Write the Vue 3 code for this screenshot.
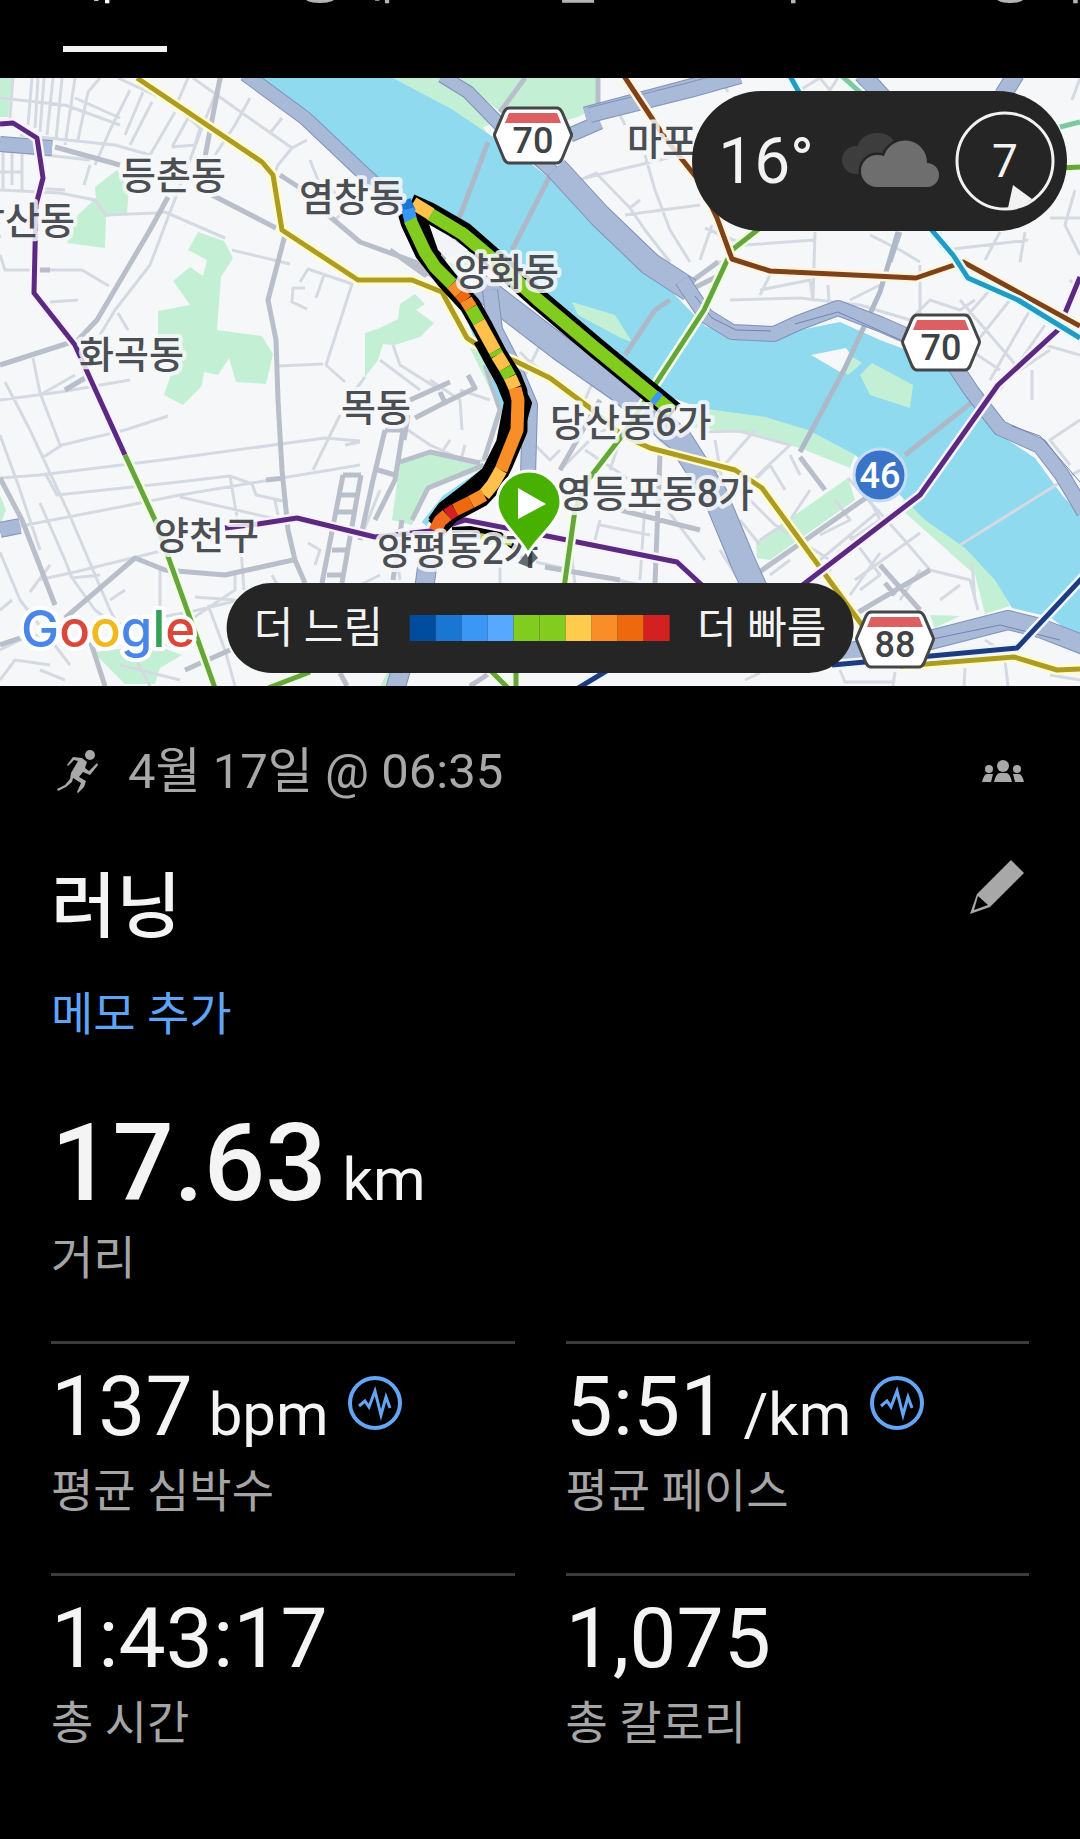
<template>
  <div class="activity-page">
    <nav class="tabs">
      <button
        v-for="tab in tabs"
        :key="tab"
        type="button"
        class="tab"
        :class="{ 'is-active': tab === activeTab }"
        @click="activeTab = tab"
      >
        <span class="tab-label">{{ tab }}</span>
        <span class="tab-line"></span>
      </button>
    </nav>

    <section class="map">
      <svg class="map-canvas" viewBox="0 78 1080 608" role="img" aria-label="러닝 경로 지도">
        <rect x="0" y="78" width="1080" height="608" fill="#f6f7f8" />

        <!-- parks -->
        <path v-for="(d, i) in parks" :key="'p' + i" :d="d" fill="#c3f0d5" />

        <!-- streets -->
        <path class="street" :d="streets" />
        <path class="avenue" :d="avenues" />

        <!-- river -->
        <path class="water" :d="river" />
        <path fill="#c3f0d5" d="M572 302L615 315L632 342L621 338L578 315ZM872 363L913 385L910 408L870 395L860 375ZM845 352L862 363L848 375L838 366Z" />
        <path fill="#f6f7f8" d="M811 355L846 348L852 356L840 372Z" />
        <path fill="#f6f7f8" d="M428 226L448 240L466 262L456 266L446 260L436 245Z" />
        <path class="stream" d="M493 378L504 404L508 432L492 466L445 498L424 524M472 325L490 370" />
        <path class="bridge" d="M488 142L470 190L442 262M552 172L512 250M670 300L655 310L625 355M898 232L880 292L845 368L800 452M905 455L975 400" />
        <path class="street" d="M1080 470L960 545" />

        <!-- expressways -->
        <g v-for="(road, i) in expressways" :key="'e' + i">
          <path class="highway-edge" :d="road.d" :stroke-width="road.width + 2" />
          <path class="highway" :d="road.d" :stroke-width="road.width" />
        </g>
        <path class="highway-lane" d="M695 296L712 318L736 330L771 331M795 324L838 312L905 342M1012 426L1040 436L1080 482M870 652L1000 625L1060 640" />

        <!-- subway -->
        <g v-for="(line, i) in subway" :key="'s' + i">
          <path class="line-case" :d="line.d" :stroke="line.glow" />
          <path class="line" :d="line.d" :stroke="line.color" />
        </g>

        <!-- recorded track -->
        <path class="track-case" d="M410 204L430 213L463 232L495 260L537 298L595 347L640 384L674 412" />
        <path class="track-case" d="M408 212L411 222L425 252L447 280L470 305L483 328L497 355L511 377L517 392L517 430L503 463L493 483L480 497L450 513L436 528" />
        <path class="track-shade" d="M480 340L503 382L511 402L503 443L488 473L470 488L444 508L434 522" />
        <path class="track-shade thin" d="M420 214L428 232L438 256M515 378L528 403L521 428" />
        <path fill="#f3f4f8" d="M430 227L450 237L468 250L446 258L438 250Z" />
        <path
          v-for="(part, i) in track"
          :key="'t' + i"
          class="track"
          :d="part.d"
          :stroke="part.color"
        />
        <path d="M452 530L470 529L500 535L515 548" fill="none" stroke="#000" stroke-width="6" />
        <path d="M460 536L480 536" fill="none" stroke="#57a9ff" stroke-width="5" />
        <path d="M480 536L512 543" fill="none" stroke="#b5cf4a" stroke-width="6" />

        <!-- place names -->
        <text
          v-for="place in places"
          :key="place.name"
          class="place"
          :x="place.x"
          :y="place.y"
        >{{ place.name }}</text>

        <!-- road shields -->
        <g v-for="(shield, i) in shields" :key="'h' + i" :transform="`translate(${shield.x} ${shield.y})`">
          <path d="M-24 -27H24Q27 -27 29 -23L38 -2Q39 0 38 2L29 24Q27 28 24 28H-24Q-27 28 -29 24L-38 2Q-39 0 -38 -2L-29 -23Q-27 -27 -24 -27Z" fill="#fff" stroke="#43474a" stroke-width="3" />
          <path d="M-24 -22H24L28 -12H-28Z" fill="#dc5f62" />
          <text class="shield-text" x="0" y="18">{{ shield.label }}</text>
        </g>
        <circle cx="880" cy="475" r="26" fill="#3b73c8" stroke="#c5ddf5" stroke-width="3" />
        <text class="route-text" x="880" y="488">46</text>

        <!-- start marker -->
        <path d="M518 563L530 548L538 558L528 567Z" fill="#26303a" opacity="0.7" />
        <path d="M528 554C520 536 497 522 497 502A32 31 0 0 1 561 502C561 522 537 537 528 554Z" fill="#48b000" stroke="#fff" stroke-width="3" />
        <path d="M518 488L546 504L518 519Z" fill="#fff" />

        <text class="google" x="21" y="647"><tspan fill="#4a86e8">G</tspan><tspan fill="#d9483b">o</tspan><tspan fill="#f0b91f">o</tspan><tspan fill="#4a86e8">g</tspan><tspan fill="#35a257">l</tspan><tspan fill="#d9483b">e</tspan></text>
      </svg>

      <div class="weather">
        <span class="temperature">16°</span>
        <svg class="clouds" viewBox="0 0 100 56" aria-hidden="true">
          <path d="M14 41A14 14 0 0 1 16 13A22 22 0 0 1 54 9L44 22L20 41Z" fill="#3d3d3d" />
          <path d="M36 54A16 16 0 0 1 36 22Q40 22 43 23A22 22 0 0 1 86 30A12 12 0 0 1 86 54Z" fill="#6e6e6e" stroke="#252525" stroke-width="5" paint-order="stroke" />
        </svg>
        <div class="wind">
          <svg viewBox="0 0 100 100" aria-hidden="true">
            <circle cx="50" cy="50" r="48" fill="none" stroke="#f2f2f2" stroke-width="3" />
            <path d="M58 74L77 88Q66 97 53 97Z" fill="#f2f2f2" />
          </svg>
          <span>7</span>
        </div>
      </div>

      <div class="legend">
        <span>더 느림</span>
        <div class="legend-scale">
          <i v-for="(color, i) in paceColors" :key="i" :style="{ background: color }"></i>
        </div>
        <span>더 빠름</span>
      </div>
    </section>

    <main class="summary">
      <div class="meta-row">
        <svg class="run-icon" viewBox="0 0 42 44" aria-hidden="true">
          <circle cx="33" cy="6" r="5" />
          <path d="M11 17L10 16L16 8L25 9L30 13L28 19L32 22L40 14L41 16L33 26L26 23L22 28L29 32L27 38L21 44L20 43L24 34L16 29L15 33L9 38L1 42L0 40L8 36L13 30L14 24L21 12L17 11Z" />
        </svg>
        <span class="meta-date">4월 17일 @ 06:35</span>
        <button type="button" class="icon-button" aria-label="공개 대상">
          <svg class="group-icon" viewBox="0 0 42 22" aria-hidden="true">
            <circle cx="21" cy="6" r="6" />
            <circle cx="7" cy="9" r="4" />
            <circle cx="35" cy="9" r="4" />
            <path d="M12 22Q14 13 18 13H24Q28 13 30 22ZM0 22Q2 14 5 14H11L9 22ZM42 22Q40 14 37 14H31L33 22Z" />
          </svg>
        </button>
      </div>

      <div class="title-row">
        <h1>러닝</h1>
        <button type="button" class="icon-button" aria-label="이름 편집">
          <svg class="pencil-icon" viewBox="0 0 54 54" aria-hidden="true">
            <path fill-rule="evenodd" d="M41 0L54 13L20 47L0 54L7 34ZM8 36L4 50L18 45Z" />
          </svg>
        </button>
      </div>

      <button type="button" class="memo-button">메모 추가</button>

      <div class="stat stat-main">
        <p class="stat-value"><strong>17.63</strong> <span class="unit">km</span></p>
        <p class="stat-label">거리</p>
      </div>

      <div class="stat-grid">
        <div v-for="stat in stats" :key="stat.label" class="stat">
          <p class="stat-value">
            <span>{{ stat.value }}</span>
            <span v-if="stat.unit" class="unit">{{ stat.unit }}</span>
            <button v-if="stat.insight" type="button" class="insight" :aria-label="stat.label + ' 분석'">
              <svg viewBox="0 0 54 54" aria-hidden="true">
                <circle cx="27" cy="27" r="25" stroke-width="4" />
                <path d="M11 30L17 25L21 31L27 15L33 39L38 21L42 32" stroke-width="3" />
              </svg>
            </button>
          </p>
          <p class="stat-label">{{ stat.label }}</p>
        </div>
      </div>
    </main>
  </div>
</template>

<script setup>
import { ref } from 'vue'

const tabs = ['개요', '통계', '랩', '차트', '장비']
const activeTab = ref('개요')

const stats = [
  { value: '137', unit: 'bpm', label: '평균 심박수', insight: true },
  { value: '5:51', unit: '/km', label: '평균 페이스', insight: true },
  { value: '1:43:17', label: '총 시간' },
  { value: '1,075', label: '총 칼로리' }
]

const paceColors = [
  '#004da0', '#1976d2', '#3b97f5', '#57a9ff', '#82cb1f',
  '#82cb1f', '#ffcb4c', '#f98d27', '#ee680d', '#d32121'
]

const places = [
  { name: '등촌동', x: 121, y: 189 },
  { name: '갈산동', x: -30, y: 234 },
  { name: '염창동', x: 299, y: 211 },
  { name: '양화동', x: 454, y: 285 },
  { name: '화곡동', x: 79, y: 368 },
  { name: '목동', x: 341, y: 421 },
  { name: '마포', x: 627, y: 155 },
  { name: '당산동6가', x: 550, y: 436 },
  { name: '영등포동8가', x: 557, y: 507 },
  { name: '양천구', x: 154, y: 549 },
  { name: '양평동2가', x: 377, y: 564 }
]

const shields = [
  { label: '70', x: 533, y: 135 },
  { label: '70', x: 941, y: 342 },
  { label: '88', x: 895, y: 639 }
]

const river = 'M255 78L310 112L350 158L382 188L412 208L470 232L530 290L600 345L656 392L700 408L765 417L808 430L855 455L885 480L925 520L965 548L995 580L1012 608L1050 617L1080 640V515L1062 495L1035 458L1000 435L985 420L965 380L920 355L880 340L840 322L800 330L775 340L735 337L705 326L675 295L640 260L590 210L520 155L490 135L450 108L393 78Z'

const parks = [
  'M0 78H13L8 117H0Z',
  'M117 170L129 188L127 213L106 217L105 248L67 243L78 215L96 198L95 187Z',
  'M198 232L224 241L233 258L221 277L217 330L262 336L273 354L266 384L236 382L229 358L218 375L204 372L202 385L200 388L183 405L164 395L176 360L158 350V311L190 305L173 281L190 267L203 276L207 260L188 250Z',
  'M0 495L6 510L0 525Z',
  'M93 652L155 645L182 655L160 668L155 684H125Z',
  'M415 294L425 304L416 310L434 323L420 337L395 345L383 344L378 360L365 377V333L380 328L398 319L400 304Z',
  'M393 78H445L475 103L490 125L483 127L492 140L450 108Z',
  'M460 78H600L595 108L578 117L530 130L500 112Z',
  'M400 462L436 452L475 460L488 468L460 478L428 490L412 525L392 520Z',
  'M470 348L488 352L502 380L506 400L500 410Z',
  'M440 240L455 240L480 262L455 275Z',
  'M550 172L575 188L675 291L668 290Z',
  'M690 405L765 415L808 430L855 455L850 468L800 448L740 433L690 427Z',
  'M756 542L848 478L855 500L770 560L757 558Z',
  'M905 487L990 565L1010 606L985 614L975 575L902 510Z',
  'M755 577L766 580L760 585Z',
  'M930 615L960 616L935 628Z',
  'M255 78L267 84L320 118L360 165L352 162L310 118Z',
  'M420 570H436L430 600L390 686H380L405 640Z'
]

const streets = [
  // north-west
  'M13 78L10 118M32 78L28 125M38 78L35 128M44 78L40 132M53 78L47 135M62 78L56 140M75 78L65 145M0 98L65 105L120 125M20 135L115 145L150 155M100 78L88 92L78 140M118 78L172 103L200 128L195 145L172 147M130 90L110 130L95 165M143 92L125 135M152 102L130 145M175 112L150 155M188 118L172 147M120 118L75 98M188 78L175 108M193 78L245 115L292 148L278 165L275 172M222 78L205 120L190 160M250 98L235 125L215 155M282 118L270 133M307 140L292 148M205 120L150 265L115 310L100 335M0 150L90 160',
  'M3 150V190M12 150V185M22 152V190M0 172H22M0 190L60 193L95 200L106 215L155 213L165 212L225 238M232 250L290 264M0 255L5 270L82 270L109 286M50 302L78 300M118 313L128 330M84 185L90 165M35 188L65 190M310 160L322 190M335 220L345 210L330 185M300 282L308 269L352 284L326 365L345 382M324 275L316 298M305 288H293L292 302L307 309M278 366L323 364',
  // west
  'M0 400L60 392L130 380M5 382L30 430L70 516L110 610L150 686M33 358L40 393L60 445M40 395L75 375M42 458L62 445L125 430L168 416M0 478L40 475L170 459L325 438L360 441M0 435L20 490L40 550M45 473L57 495L170 483L230 476L252 484L256 495L288 502M0 530L120 507L180 495L270 480L360 465M180 497L280 520M40 503L65 560L72 578L100 575M38 580L75 572L165 550L185 545M230 476L240 535L244 590M0 552L20 600L70 665M30 592L50 565M0 610L12 600M160 570V610L155 650M195 597L235 600M235 570V590L190 620L160 650M275 500L278 515M272 575L280 590L190 612L115 625L95 610L70 575M0 650L20 640L60 630M0 680L15 660L50 665M40 670L65 680M110 600L125 590M208 605L225 650L235 686M120 665L180 680M340 415L313 470M345 445L360 442',
  // mok-dong and south
  'M365 377L355 390M380 360L420 390M393 345L400 365L440 390M430 380L460 400L462 430M460 390L490 400M408 430L430 445L470 463L485 460M460 463L465 445M380 490L360 540M440 455L450 440M515 555L540 563L640 585M570 540L575 585M595 540L600 520M500 560V583M395 545L400 580M380 575L360 585M308 543L320 550L315 565',
  // yeongdeungpo
  'M530 340L560 360M540 370L528 360L520 352M545 335L525 375M600 365L585 400M640 405L590 440L560 470M630 400L660 440L700 470M530 440L550 460L560 450M585 450L660 500L705 560M600 525L650 535M620 440L610 470M645 505L640 580M700 432L740 431L790 445L755 478M715 440L722 480L755 575M730 480L775 525L830 560M740 520L760 545M690 480L720 470L755 430M720 550L745 590',
  // yeouido
  'M790 455L800 475M848 478L900 535L930 570L970 580L978 610M835 500L850 520L820 535M810 490L790 520L760 540M920 533L855 580M880 510L820 560M870 500L880 520L850 540M850 535L880 575L860 590M840 550L830 570L800 590M790 560L770 575M920 570L900 600M940 600L960 585M785 490L770 465L755 480M880 553L850 595M972 563L975 600M895 672L893 686M965 668L964 686M1005 660L1008 686M745 680L760 673M840 670L845 682L893 682M985 640L1000 650M1050 675L1080 680',
  // north-east
  'M580 180L596 173L630 208L645 230L670 262M620 115L625 125M645 155L655 190L670 230L690 262M585 178L680 155M625 215L700 205M630 208L640 200M720 78L728 92M800 90L820 78L830 90L838 78M812 92V98M940 232L945 250L1028 240M1080 355L1045 345L1025 365M815 232L813 300L810 280L760 290M705 228L745 245L815 240M700 260L712 225M760 295L770 275M730 300L800 298L860 305L910 320L930 300L960 310L975 300M715 262L750 262M828 285L830 315M880 285L850 300M920 265V320M960 300L1020 370L1050 350M990 290L950 335M1010 300L970 350M1030 310L990 380M1045 325L1000 390M955 340L1000 370M1070 280L1080 290M1050 218H1080M1075 190L1065 225L1080 255M1025 232L1020 262M1000 232L985 260M870 235L900 250L920 262M1032 370V400M1080 420L1050 440L1070 465M1080 78L1072 100'
].join('')

const avenues = 'M55 147L120 165M168 197L150 230L97 320L78 340L0 365M212 195L276 228M285 235L268 300L276 340L278 400L282 470L288 530L295 560L305 583M280 175L300 188M328 215L360 242L415 262L440 282M0 478L22 520L55 605M65 618L135 558L165 570L225 575L293 560M0 645L20 638M65 390L85 378M205 157L220 78M40 270H50M266 480L285 478M343 475L322 583M361 475L342 583M343 475H361M340 495H357M336 512H355M332 550H347M327 575H343M410 400L450 382M415 418L440 405L475 388L468 375M440 392L446 405M385 430L373 480L360 540M403 430L395 480L375 520M385 430H403M378 470L395 475M485 365L500 410L484 460M408 415L404 440M400 462L430 452L480 463M484 465L428 488L412 520M402 520L393 580M598 78V108M525 78L500 112M600 400L560 470M660 455L655 583M620 510L700 530M755 575L870 495L910 455M800 457L825 490M880 565L920 610M845 620L930 570M885 583L895 595M460 240L425 275L390 250M718 276L690 290M718 262L680 290M900 232L890 262M545 567L620 580M105 686L90 640M340 673L347 686M470 686L490 673M185 670L230 650'

const expressways = [
  { width: 14, d: 'M0 144L52 148' },
  { width: 13, d: 'M245 74L305 118L362 172L398 205' },
  { width: 24, d: 'M478 285L560 348L620 390L680 440L715 495L742 560L760 600' },
  { width: 14, d: 'M490 290L495 330L513 365L530 405L528 475' },
  { width: 12, d: 'M442 76L468 92L505 130L560 178' },
  { width: 22, d: 'M556 168L600 216L650 264L690 290' },
  { width: 14, d: 'M682 280L706 316L732 332L774 334L798 323L838 308L880 324L930 346L952 362L972 392L1000 428L1040 446L1062 475L1084 512' },
  { width: 13, d: 'M585 114L720 78M570 135L600 122' },
  { width: 14, d: 'M740 76L690 90L590 115' },
  { width: 16, d: 'M862 74L890 105M1016 74L1003 95' },
  { width: 18, d: 'M830 655L930 640L1008 620L1040 628L1084 645' },
  { width: 14, d: 'M0 530L20 526' },
  { width: 18, d: 'M428 560L424 590L395 690' }
]

const subway = [
  { color: '#ad9b22', glow: '#fffcd0', d: 'M137 78L262 162L273 175L282 230L358 280L412 280L442 292L467 338L485 350L515 361L550 378L590 408L622 435L650 448L735 470L762 488L862 625M900 666L1014 657L1057 670L1080 669' },
  { color: '#5b2a80', glow: '#f7f2fb', d: 'M0 124L13 123L37 138L43 178L36 205L34 293L75 345L125 455M225 528L258 524L297 518L375 537L430 531L465 520L552 537L677 562L705 588M800 587L920 495L998 385L1058 330L1080 277' },
  { color: '#65a63a', glow: '#f2fde8', d: 'M125 455L155 520L215 688M564 588L575 510L588 480L625 432L655 385L704 310L718 280L732 250L765 224M268 688L310 672M490 670L510 690M516 670V690M1060 168L1080 167' },
  { color: '#7d4217', glow: '#fff4e2', d: 'M624 76L665 138L700 182L717 218L732 259L770 271L916 278L963 262L1080 326' },
  { color: '#219bc4', glow: '#e4fcff', d: 'M790 76L800 94M930 228L953 255L968 278L1018 300L1080 338' },
  { color: '#7cc8a2', glow: '#effff6', d: 'M842 76L862 94M1060 127L1080 122' },
  { color: '#1d3c80', glow: '#eef6ff', d: 'M832 665L920 657L1017 648L1084 576M575 690L608 670' }
]

const track = [
  { color: '#82cb1f', d: 'M430 214L463 234L495 261L537 299L595 348L640 385L672 411' },
  { color: '#ffc04c', d: 'M413 203L431 214' },
  { color: '#1976d2', d: 'M402 209L413 204' },
  { color: '#3b97f5', d: 'M408 209L411 222' },
  { color: '#82cb1f', d: 'M410 220L425 252L435 267L452 284' },
  { color: '#f98d27', d: 'M452 284L460 293' },
  { color: '#ee680d', d: 'M460 293L466 300' },
  { color: '#f98d27', d: 'M466 300L471 308' },
  { color: '#82cb1f', d: 'M471 308L479 322' },
  { color: '#ffc04c', d: 'M479 322L495 351' },
  { color: '#82cb1f', d: 'M495 351L497 355' },
  { color: '#ffc04c', d: 'M497 355L505 368' },
  { color: '#82cb1f', d: 'M505 368L510 377' },
  { color: '#ffc04c', d: 'M510 377L515 388' },
  { color: '#f98d27', d: 'M515 388L518 400L517 430L501 470' },
  { color: '#ffc04c', d: 'M501 470L493 484L484 495' },
  { color: '#f98d27', d: 'M484 495L471 502' },
  { color: '#ee680d', d: 'M471 502L455 510' },
  { color: '#d32121', d: 'M455 510L447 515' },
  { color: '#f06b1e', d: 'M447 515L440 521L435 531' },
  { color: '#3b97f5', d: 'M654 396L659 400' }
]
</script>

<style>
body {
  margin: 0;
  background: #000;
}
</style>

<style scoped>
.activity-page {
  min-height: 100vh;
  background: #000;
  color: #f4f4f4;
  font-family: Roboto, "Noto Sans CJK KR", sans-serif;
}

button {
  padding: 0;
  border: 0;
  background: none;
  color: inherit;
  font: inherit;
  cursor: pointer;
}

p,
h1 {
  margin: 0;
}

.tabs {
  display: flex;
  align-items: flex-end;
  height: 78px;
  overflow: hidden;
}

.tab {
  display: flex;
  flex: 0 0 230px;
  flex-direction: column;
  align-items: center;
  gap: 25px;
  padding-bottom: 26px;
  color: #b4b4b4;
}

.tab-label {
  font-size: 54px;
  line-height: 80px;
}

.tab-line {
  width: 104px;
  height: 6px;
}

.tab.is-active {
  color: #fff;
}

.tab.is-active .tab-line {
  background: #f3f3f3;
}

.map {
  position: relative;
}

.map-canvas {
  display: block;
  width: 100%;
}

.street,
.avenue,
.bridge,
.stream,
.highway,
.highway-edge,
.highway-lane,
.line,
.line-case,
.track,
.track-case,
.track-shade {
  fill: none;
  stroke-linejoin: round;
}

.street {
  stroke: #d5dae2;
  stroke-width: 3;
}

.avenue {
  stroke: #b9bfca;
  stroke-width: 5;
}

.water {
  fill: #8fdaee;
}

.stream {
  stroke: #8fdaee;
  stroke-width: 6;
}

.bridge {
  stroke: #adb9c9;
  stroke-width: 5;
}

.highway {
  stroke: #a9b9d8;
}

.highway-edge {
  stroke: #7f92b8;
}

.highway-lane {
  stroke: #6f84ae;
  stroke-width: 1;
}

.line {
  stroke-width: 5;
}

.line-case {
  stroke-width: 10;
}

.track {
  stroke-width: 13;
}

.track-case {
  stroke: #000;
  stroke-width: 21;
}

.track-shade {
  stroke: #000;
  stroke-width: 14;
}

.track-shade.thin {
  stroke-width: 8;
}

.place {
  fill: #4b4e53;
  stroke: #f7f8fa;
  stroke-opacity: 0.85;
  stroke-width: 8;
  stroke-linejoin: round;
  paint-order: stroke;
  font-size: 38px;
  font-weight: 500;
}

.shield-text,
.route-text {
  fill: #3f4346;
  font-size: 36px;
  font-weight: 500;
  text-anchor: middle;
}

.route-text {
  fill: #fff;
}

.google {
  stroke: #fff;
  stroke-width: 8;
  stroke-linejoin: round;
  paint-order: stroke;
  font-family: Inter, sans-serif;
  font-size: 51px;
  font-weight: 500;
}

.weather {
  position: absolute;
  top: 13px;
  right: 13px;
  display: flex;
  align-items: center;
  height: 140px;
  padding: 0 12px 0 26px;
  border-radius: 70px;
  background: #252525;
  color: #f2f2f2;
}

.temperature {
  font-size: 64px;
}

.clouds {
  width: 100px;
  height: 56px;
  margin: 0 14px 0 27px;
}

.wind {
  display: grid;
  place-items: center;
  width: 100px;
  height: 100px;
  font-size: 46px;
}

.wind > * {
  grid-area: 1 / 1;
}

.legend {
  position: absolute;
  bottom: 13px;
  left: 50%;
  display: flex;
  align-items: center;
  gap: 27px;
  height: 90px;
  padding: 0 27px;
  border-radius: 45px;
  background: #252525;
  color: #f2f2f2;
  font-size: 43px;
  line-height: 52px;
  white-space: nowrap;
  transform: translateX(-50%);
}

.legend-scale {
  display: flex;
}

.legend-scale i {
  width: 26px;
  height: 26px;
}

.summary {
  padding: 52px 51px 80px;
}

.meta-row {
  display: flex;
  align-items: center;
  height: 66px;
  color: #a8a8a8;
  font-size: 49px;
}

.meta-date {
  padding-bottom: 10px;
}

.meta-row svg,
.title-row svg {
  display: block;
  fill: #a8a8a8;
}

.run-icon {
  width: 42px;
  height: 44px;
  margin: 0 29px 0 6px;
}

.icon-button {
  margin-left: auto;
  padding: 5px;
}

.group-icon {
  width: 42px;
  height: 22px;
}

.title-row {
  display: flex;
  align-items: flex-start;
  justify-content: space-between;
  margin-top: 51px;
}

.title-row h1 {
  font-size: 71px;
  font-weight: 500;
  line-height: 104px;
}

.pencil-icon {
  width: 54px;
  height: 54px;
}

.memo-button {
  display: block;
  margin-top: 20px;
  color: #5fa5f7;
  font-size: 46px;
  line-height: 70px;
}

.stat-value {
  display: flex;
  align-items: baseline;
  gap: 16px;
  height: 92px;
  font-size: 84px;
  line-height: 84px;
}

.stat-main {
  margin-top: 60px;
}

.stat-main .stat-value {
  height: 115px;
  font-size: 108px;
  line-height: 108px;
}

.stat-value strong {
  font-weight: 500;
}

.unit {
  font-size: 60px;
}

.insight {
  align-self: flex-start;
  width: 54px;
  height: 54px;
  margin: 11px 0 0 3px;
}

.insight svg {
  display: block;
  fill: none;
  stroke: #64a6f4;
}

.stat-label {
  color: #a5a5a5;
  font-size: 46px;
  line-height: 68px;
}

.stat-grid {
  display: grid;
  grid-template-columns: 1fr 1fr;
  column-gap: 51px;
  margin-top: 49px;
}

.stat-grid .stat {
  height: 208px;
  padding-top: 21px;
  border-top: 3px solid #3b3b3b;
}
</style>
